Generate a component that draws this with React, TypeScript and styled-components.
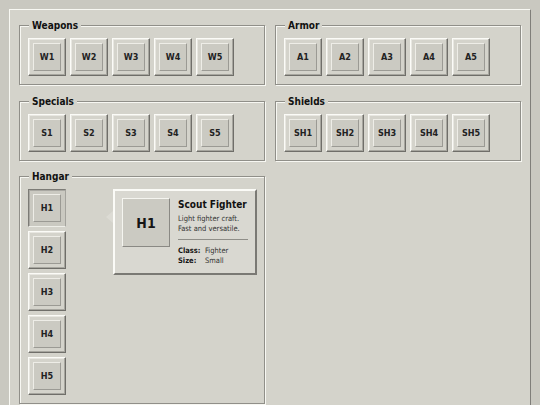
import React from "react";
import styled, { createGlobalStyle, css } from "styled-components";

const GlobalStyle = createGlobalStyle`
  html, body {
    margin: 0;
    background: #c9c8c0;
  }
  body {
    padding: 9px;
    font-family: "DejaVu Sans Condensed", "DejaVu Sans", sans-serif;
    color: #151515;
  }
`;

const center = css`
  display: flex;
  justify-content: center;
  align-items: center;
`;

const Panel = styled.div`
  display: grid;
  grid-template-columns: 246px 246px;
  gap: 10.5px 10px;
  width: 502px;
  padding: 10px 9px 10px;
  background: #d4d3cb;
  border: 1px solid;
  border-color: #f8f8f3 #7f7e79 #7f7e79 #f8f8f3;
`;

const Group = styled.fieldset`
  margin: 0;
  min-width: 0;
  padding: 7px 8px 8px;
  border: 1px solid #908f89;
  box-shadow: inset 1px 1px 0 #f7f7f2, 1px 1px 0 #f7f7f2;
`;

const Legend = styled.legend`
  margin-left: 1px;
  padding: 0 3px;
  background: #d4d3cb;
  font-size: 10px;
  line-height: 11px;
  font-weight: bold;
  color: #111;
`;

const Row = styled.div`
  display: flex;
  gap: 4px;
`;

const Column = styled.div`
  display: flex;
  flex-direction: column;
  gap: 4px;
`;

const Slot = styled.button<{ $selected?: boolean }>`
  ${center};
  width: 38px;
  height: 38px;
  padding: 0;
  border: 1px solid;
  font-family: inherit;
  cursor: pointer;
  ${(p) =>
    p.$selected
      ? css`
          background: #cac9c1;
          border-color: #7c7b76 #a4a39d #eeeee8 #7c7b76;
          box-shadow: inset 1px 1px 0 #a9a8a2;
        `
      : css`
          background: #d4d3cb;
          border-color: #fbfbf7 #6f6e69 #6f6e69 #fbfbf7;
          box-shadow: inset -1px -1px 0 #a7a69f, inset 1px 1px 0 #e8e7e1;
        `}
`;

const Face = styled.span`
  ${center};
  width: 28px;
  height: 28px;
  box-sizing: border-box;
  background: #cbcac2;
  border: 1px solid;
  border-color: #eeede7 #9b9a94 #9b9a94 #eeede7;
  font-size: 9px;
  font-weight: bold;
  color: #222;
`;

const HangarBody = styled.div`
  display: flex;
  align-items: flex-start;
`;

const Card = styled.div`
  position: relative;
  display: flex;
  gap: 8px;
  width: 144px;
  box-sizing: border-box;
  margin-left: 47px;
  padding: 7px 7px 7px;
  background: #d9d8d1;
  border: 2px solid;
  border-color: #fbfbf7 #7a7974 #7a7974 #fbfbf7;

  &::before {
    content: "";
    position: absolute;
    left: -9px;
    top: 20px;
    border: 6px solid transparent;
    border-right: 7px solid #dcdbd4;
    border-left: 0;
  }
`;

const BigFace = styled.div`
  ${center};
  flex: none;
  width: 48px;
  height: 49px;
  box-sizing: border-box;
  background: #cbcac2;
  border: 1px solid;
  border-color: #f5f5f0 #8a8984 #8a8984 #f5f5f0;
  font-size: 14px;
  font-weight: bold;
  color: #151515;
`;

const Info = styled.div`
  display: flex;
  flex-direction: column;
  min-width: 0;
`;

const Title = styled.div`
  font-size: 10px;
  line-height: 13px;
  font-weight: bold;
  white-space: nowrap;
  color: #111;
`;

const Desc = styled.div`
  margin-top: 3px;
  font-size: 7.5px;
  line-height: 10px;
  color: #333;
`;

const Divider = styled.hr`
  margin: 5px 0 6px;
  border: 0;
  border-top: 1px solid #8f8e88;
  width: 70px;
`;

const Stats = styled.div`
  display: grid;
  grid-template-columns: 27px auto;
  font-size: 7.5px;
  line-height: 10px;
  color: #333;
`;

const StatLabel = styled.span`
  font-weight: bold;
  color: #151515;
`;

type Section = { title: string; prefix: string };

const sections: Section[] = [
  { title: "Weapons", prefix: "W" },
  { title: "Armor", prefix: "A" },
  { title: "Specials", prefix: "S" },
  { title: "Shields", prefix: "SH" },
];

const nums = [1, 2, 3, 4, 5];

const App = () => {
  return (
    <>
      <GlobalStyle />
      <Panel>
        {sections.map((sec) => (
          <Group key={sec.title}>
            <Legend>{sec.title}</Legend>
            <Row>
              {nums.map((n) => (
                <Slot key={n}>
                  <Face>
                    {sec.prefix}
                    {n}
                  </Face>
                </Slot>
              ))}
            </Row>
          </Group>
        ))}
        <Group>
          <Legend>Hangar</Legend>
          <HangarBody>
            <Column>
              {nums.map((n) => (
                <Slot key={n} $selected={n === 1}>
                  <Face>H{n}</Face>
                </Slot>
              ))}
            </Column>
            <Card>
              <BigFace>H1</BigFace>
              <Info>
                <Title>Scout Fighter</Title>
                <Desc>
                  Light fighter craft.
                  <br />
                  Fast and versatile.
                </Desc>
                <Divider />
                <Stats>
                  <StatLabel>Class:</StatLabel>
                  <span>Fighter</span>
                  <StatLabel>Size:</StatLabel>
                  <span>Small</span>
                </Stats>
              </Info>
            </Card>
          </HangarBody>
        </Group>
      </Panel>
    </>
  );
};

export default App;
